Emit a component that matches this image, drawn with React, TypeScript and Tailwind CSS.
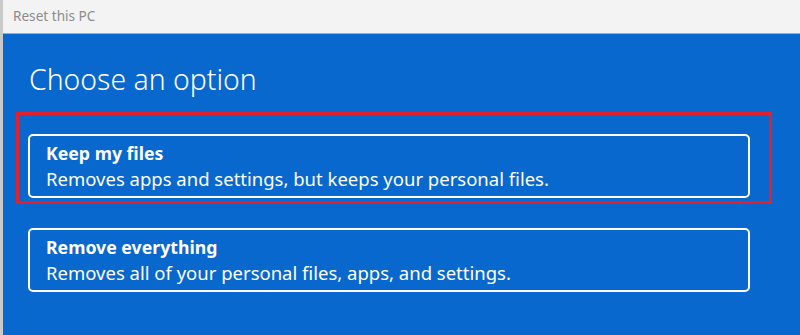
import React from "react";

export default function App() {
  return (
    <div
      className="relative flex h-[335px] w-[800px] flex-col overflow-hidden border-l-[3px] border-[#c9c9c9] bg-[#0868cd]"
      style={{ fontFamily: '"Noto Sans", "Open Sans", Arial, sans-serif' }}
    >
      <div className="flex h-[33px] shrink-0 items-center bg-[#f3f3f3] pl-[10px]">
        <span className="text-[13.6px] text-[#8c8c8c]">Reset this PC</span>
      </div>
      <div className="h-px shrink-0 bg-[#7fb4ea]" />
      <div className="flex flex-1 flex-col pl-[25px] pr-[50px]">
        <h1 className="mt-[26px] pl-[1px] text-[28.4px] font-light leading-[38px] text-white">
          Choose an option
        </h1>
        <div className="mt-[36px] flex flex-col gap-[30px]">
          <div className="flex h-[64px] flex-col justify-center rounded-[5px] border-2 border-white pl-[16px] text-white">
            <div className="text-[17.7px] font-bold leading-[26px]">Keep my files</div>
            <div className="text-[18.5px] leading-[26px]">
              Removes apps and settings, but keeps your personal files.
            </div>
          </div>
          <div className="flex h-[64px] flex-col justify-center rounded-[5px] border-2 border-white pl-[16px] text-white">
            <div className="text-[17.7px] font-bold leading-[26px]">Remove everything</div>
            <div className="text-[18.5px] leading-[26px]">
              Removes all of your personal files, apps, and settings.
            </div>
          </div>
        </div>
      </div>
      <div className="pointer-events-none absolute left-[13px] top-[112px] h-[92px] w-[756px] border-[3px] border-[#e3202c]" />
    </div>
  );
}
